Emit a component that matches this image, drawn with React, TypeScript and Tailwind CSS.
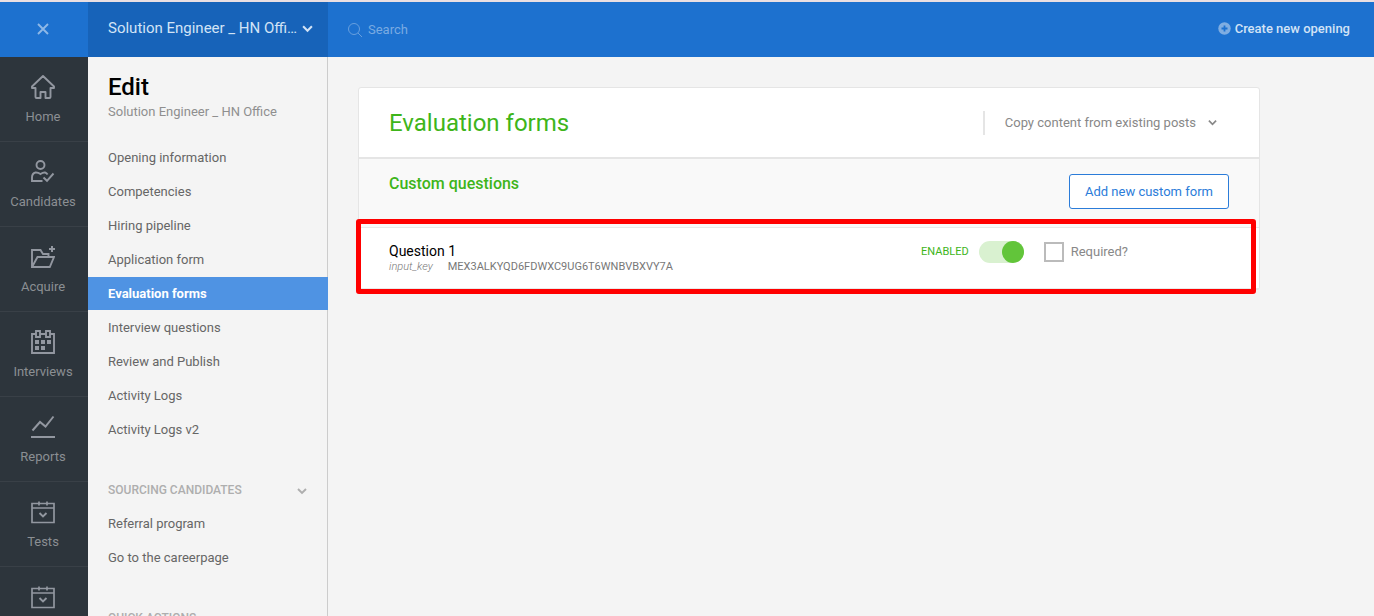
import React from 'react'

const railItems = [
    { label: 'Home', icon: 'home' },
    { label: 'Candidates', icon: 'candidates' },
    { label: 'Acquire', icon: 'acquire' },
    { label: 'Interviews', icon: 'interviews' },
    { label: 'Reports', icon: 'reports' },
    { label: 'Tests', icon: 'tests' },
    { label: '', icon: 'tests' },
]

const editLinks = [
    'Opening information',
    'Competencies',
    'Hiring pipeline',
    'Application form',
    'Evaluation forms',
    'Interview questions',
    'Review and Publish',
    'Activity Logs',
    'Activity Logs v2',
]

const sourcingLinks = ['Referral program', 'Go to the careerpage']

interface ChevronProps {
    className: string
}

const Chevron: React.FC<ChevronProps> = ({ className }) => (
    <svg viewBox="0 0 10 10" fill="none" stroke="currentColor" strokeWidth="1.9" className={className}>
        <path d="M1 3l4 4 4-4" />
    </svg>
)

interface RailIconProps {
    name: string
}

const RailIcon: React.FC<RailIconProps> = ({ name }) => (
    <svg viewBox="0 0 24 24" fill="none" stroke="currentColor" strokeWidth="1.9" className="size-6 shrink-0">
        {name === 'home' && (
            <path strokeLinejoin="round" d="M12 1L1 11.500V13H4.500V22Q4.500 23 5.500 23H9.500V17H14.500V23H18.500Q19.500 23 19.500 22V13H23V11.500Z" />
        )}
        {name === 'candidates' && (
            <>
                <circle cx="9.5" cy="5" r="4" />
                <path d="M11.500 21H1V17.500Q1 13.500 4.500 12.500Q7 12.300 9.500 14Q12 12.300 14 12.500Q15.600 13 16.600 14.500" />
                <path d="M12.500 17.500l3.500 3.300L22.500 13.500" />
            </>
        )}
        {name === 'acquire' && (
            <>
                <path d="M1 22V5H9.500L12 9H17.500V12M1 22L6.500 12H23L18.800 22Z" />
                <path strokeWidth="2" d="M21 1V7M18 4H24" />
            </>
        )}
        {name === 'interviews' && (
            <>
                <path d="M4.500 4H1V23H23V4H19.500M9.500 4H14.500M5 1H9V7H5ZM15 1H19V7H15Z" />
                <path strokeWidth="4" d="M4 12H8M10 12H14M16 12H20M4 18H8M10 18H14" />
            </>
        )}
        {name === 'reports' && (
            <>
                <path strokeWidth="2" d="M1.500 15.500L9 7L14.500 11.500L22.500 1.500" />
                <path strokeWidth="2" d="M0 22H24" />
            </>
        )}
        {name === 'tests' && (
            <>
                <path strokeWidth="1.700" d="M1 3.500H23V22.500H1ZM1 8H23M8 1.500V5.500M16 1.500V5.500" />
                <path d="M8.500 13L12 16.500L15.500 13" />
            </>
        )}
    </svg>
)

const TopBar = () => (
    <header className="flex h-[57px] shrink-0 border-t-2 border-[#eadfe2] bg-[#1d71cf] text-[#d2e3f6]">
        <button aria-label="Close" className="flex w-[88px] items-center justify-center pr-0.5 pb-px text-[#8eb8e7]">
            <svg viewBox="0 0 12 12" fill="none" stroke="currentColor" strokeWidth="1.9" className="size-3">
                <path d="M1 1l10 10M11 1L1 11" />
            </svg>
        </button>
        <button className="flex w-[240px] items-center bg-[#1763b9] pb-0.5 pl-5 text-left text-[15px]">
            <span className="w-[190px] truncate">Solution Engineer _ HN Office</span>
            <Chevron className="ml-1 size-[11px]" />
        </button>
        <label className="flex flex-1 items-center gap-1.5 pl-5 text-[#7aabe2]">
            <svg viewBox="0 0 14 14" fill="none" stroke="currentColor" className="size-3.5 opacity-80">
                <circle cx="6" cy="6" r="5.5" />
                <path d="M10 10l4 4" />
            </svg>
            <input
                type="text"
                aria-label="Search"
                placeholder="Search"
                className="flex-1 bg-transparent text-[13px] outline-none placeholder:text-[#7aabe2]"
            />
        </label>
        <button className="flex items-center gap-1 pr-6 pb-0.5 text-[13px] font-medium">
            <svg viewBox="0 0 13 13" className="size-[13px] text-[#7fade1]">
                <circle cx="6.5" cy="6.5" r="6.200" fill="currentColor" />
                <path d="M6.500 3.500v6M3.500 6.500h6" stroke="#1d71cf" strokeWidth="1.800" />
            </svg>
            Create new opening
        </button>
    </header>
)

const Rail = () => (
    <nav className="w-[88px] shrink-0 overflow-hidden bg-[#2d353c] text-[#9297a0]">
        {railItems.map((item, index) => (
            <a
                key={index}
                href="#"
                className="flex h-[85px] flex-col items-center gap-2 border-b border-[#394047] pt-[18px] pr-0.5 text-[13px] leading-5"
            >
                <RailIcon name={item.icon} />
                <span className="text-[#8b8f93]">{item.label}</span>
            </a>
        ))}
    </nav>
)

interface SideLinkProps {
    label: string
}

const SideLink: React.FC<SideLinkProps> = ({ label }) => (
    <a
        href="#"
        className={
            label === 'Evaluation forms'
                ? '-mr-px block bg-[#4f93e3] pl-5 font-bold leading-[33px] text-white'
                : 'block pl-5 leading-[33px] text-[#666666]'
        }
    >
        {label}
    </a>
)

const SideMenu = () => (
    <aside className="w-[240px] shrink-0 border-r border-[#cccccc] text-[13px]">
        <div className="pt-4 pl-5">
            <h1 className="text-2xl leading-7 font-medium text-black">Edit</h1>
            <p className="leading-[22px] text-[#8f8f8f]">Solution Engineer _ HN Office</p>
        </div>
        <nav className="mt-[18px] space-y-px">
            {editLinks.map((label) => <SideLink key={label} label={label} />)}
        </nav>
        <button className="mt-7 flex w-full items-center justify-between pr-5 pl-5 text-xs leading-[33px] font-medium text-[#aeaeae]">
            SOURCING CANDIDATES
            <Chevron className="size-2.5" />
        </button>
        <nav className="space-y-px">
            {sourcingLinks.map((label) => <SideLink key={label} label={label} />)}
        </nav>
        <h2 className="mt-7 pl-5 text-xs leading-[33px] font-medium text-[#aeaeae]">QUICK ACTIONS</h2>
    </aside>
)

const QuestionRow = () => {
    const [enabled, setEnabled] = React.useState(true)

    return (
        <div className="relative flex items-center border-b border-[#e9e9e9] bg-white pt-[13px] pr-[131px] pb-[15px] pl-[30px]">
            <div className="flex-1">
                <h3 className="text-sm leading-5 text-black">Question 1</h3>
                <p className="flex gap-[15px] text-[11px] leading-3 text-[#777777]">
                    <em className="font-light text-[#777777]">input_key</em>
                    <span>MEX3ALKYQD6FDWXC9UG6T6WNBVBXVY7A</span>
                </p>
            </div>
            <div className="flex items-center self-start">
                <label className="flex items-center gap-2.5 text-[11px] text-[#3eb51a]">
                    ENABLED
                    <input
                        type="checkbox"
                        checked={enabled}
                        onChange={() => setEnabled(!enabled)}
                        className="flex h-[22px] w-[45px] appearance-none rounded-full bg-[#d9f1d0] before:size-[22px] before:rounded-full before:bg-[#9a9a9a] checked:justify-end checked:before:bg-[#62c53a]"
                    />
                </label>
                <label className="ml-5 flex items-center gap-[7px] text-[13px] text-[#888888]">
                    <input type="checkbox" className="size-5 appearance-none border-2 border-[#bbbbbb] bg-white checked:bg-[#62c53a]" />
                    Required?
                </label>
            </div>
            <div className="pointer-events-none absolute -top-[9px] right-[3px] -bottom-[6px] -left-[3px] rounded-[3px] border-[5px] border-[#ff0000]" />
        </div>
    )
}

const App = () => (
    <div className="flex h-screen flex-col overflow-hidden bg-[#f4f4f4] font-[Roboto,sans-serif]">
        <TopBar />
        <div className="flex min-h-0 flex-1">
            <Rail />
            <SideMenu />
            <main className="flex-1 p-[30px]">
                <section className="max-w-[902px] rounded-[3px] border border-[#e5e5e5] bg-white">
                    <div className="flex items-center justify-between border-b-2 border-[#e5e5e5] pt-[19px] pr-[42px] pb-[17px] pl-[30px]">
                        <h2 className="text-2xl leading-[33px] text-[#3eb51a]">Evaluation forms</h2>
                        <button className="mb-0.5 flex items-center border-l-2 border-[#e5e5e5] pl-5 text-[13px] leading-6 text-[#888888]">
                            Copy content from existing posts
                            <Chevron className="ml-3 size-[9px]" />
                        </button>
                    </div>
                    <div className="flex items-start justify-between border-b border-[#e9e9e9] bg-[#f9f9f9] pt-[15px] pr-[30px] pb-[18px] pl-[30px]">
                        <h3 className="text-base leading-5 font-medium text-[#3eb51a]">Custom questions</h3>
                        <button className="rounded-[3px] border border-[#2b7cd9] bg-white px-[15px] text-[13px] leading-[33px] text-[#2b7cd9]">
                            Add new custom form
                        </button>
                    </div>
                    <QuestionRow />
                </section>
            </main>
        </div>
    </div>
)

export default App
